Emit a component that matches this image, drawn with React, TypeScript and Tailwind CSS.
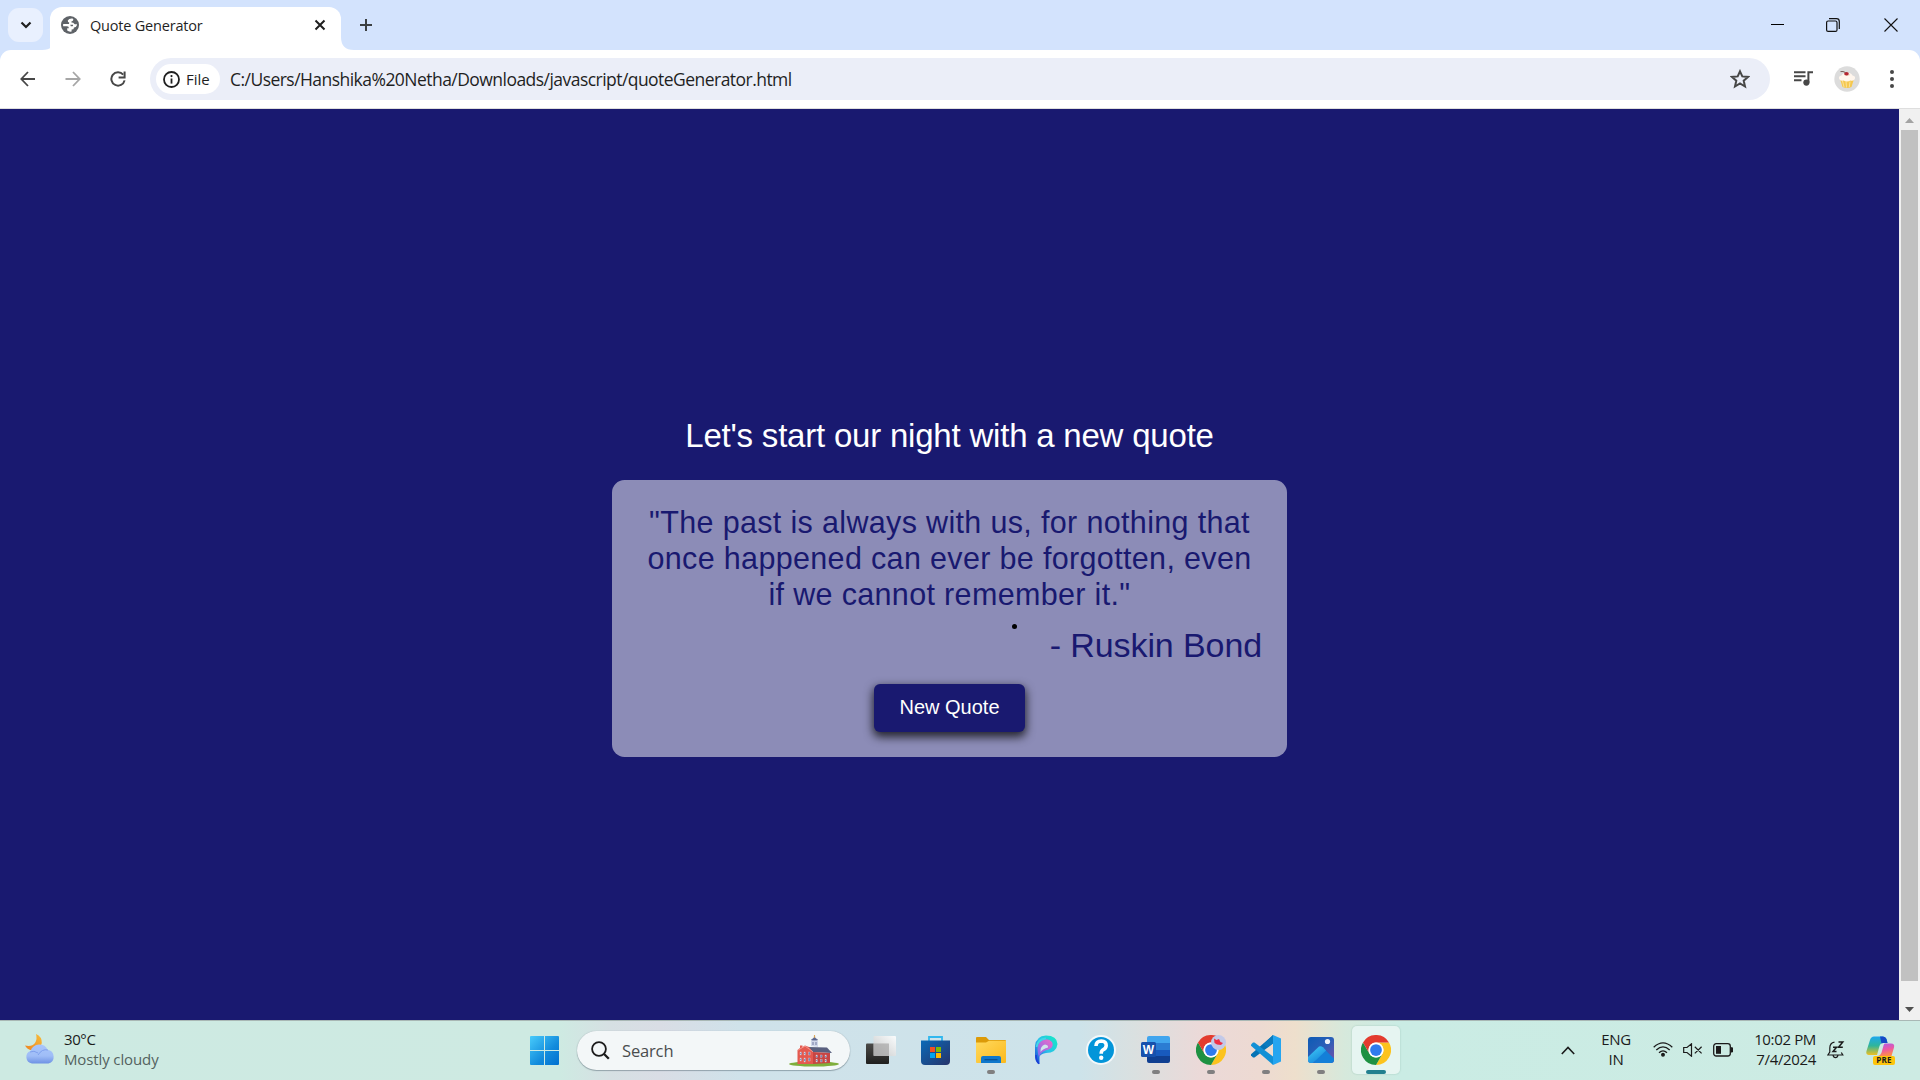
import React from "react";

const ui = "font-['Open_Sans','Noto_Sans',sans-serif]";
const arial = "font-['Liberation_Sans',Arial,sans-serif]";

function Globe() {
  return (
    <svg width="18" height="18" viewBox="0 0 18 18" className="shrink-0">
      <circle cx="9" cy="9" r="9" fill="#5f6368" />
      <path d="M11.6 2.6 Q8 2.2 6.8 4.6 Q6.6 6.4 8.2 6.6 L8 8 H2.2 Q1.900 9.200 2.200 10.200 H6 Q8 10.300 7.900 12.200 H6.200 V14.600 Q8 16 10.600 15.500 V13.600 Q13 13.600 13 11.400 Q15.200 11.400 15.800 9.400 Q15.900 8.600 15.700 7.800 Q14.400 8.800 13.200 7.800 Q12.600 6.400 10.400 6.400 V5.400 Q12.400 5.400 12.400 3.600 Z" fill="#fff" />
      <path d="M9.200 8.700 H12 Q12.400 9.600 11.600 10.300 H9.800 Q9.600 9.200 9.200 8.700Z" fill="#5f6368" />
    </svg>
  );
}

function ChromeLogo() {
  return (
    <svg width="30" height="30" viewBox="0 0 48 48">
      <path d="M24 12 H44.8 A24 24 0 0 1 24 48 L34.4 30 A12 12 0 0 0 24 12 Z" fill="#fcc31e" />
      <path d="M3.2 12 A24 24 0 0 0 24 48 L34.4 30 A12 12 0 0 1 13.6 30 Z" fill="#1e9142" />
      <path d="M3.2 12 A24 24 0 0 1 44.8 12 H24 A12 12 0 0 0 13.6 30 Z" fill="#e33b2e" />
      <circle cx="24" cy="24" r="12" fill="#fff" />
      <circle cx="24" cy="24" r="9.4" fill="#2f7bee" />
    </svg>
  );
}

function Slot({ children, state = "none" }: { children: React.ReactNode; state?: "none" | "open" | "active" }) {
  return (
    <div className="relative flex h-full w-[55px] shrink-0 items-center justify-center pb-px">
      {state === "active" && <div className="absolute inset-x-[3.5px] top-[5px] h-[48px] rounded-[5px] bg-[#e6f5f1] shadow-[0_0_1px_1px_rgba(150,190,180,0.25)]" />}
      <div className="relative">{children}</div>
      {state === "open" && <div className="absolute bottom-[6px] h-1 w-2 rounded-full bg-[#807f80]" />}
      {state === "active" && <div className="absolute bottom-[6px] h-1 w-5 rounded-full bg-[#22808f]" />}
    </div>
  );
}

function TabStrip() {
  return (
    <div className="flex h-[50px] w-full shrink-0 bg-[#d3e3fd]">
      <div className="ml-2 mt-2 flex h-[34px] w-[35px] items-center justify-center rounded-[11px] bg-[#e9f0fe]">
        <svg width="12" height="8" viewBox="0 0 12 8"><path d="M1.5 1.5 L6 6 L10.5 1.5" fill="none" stroke="#1f1f1f" strokeWidth="2.2" /></svg>
      </div>
      <svg width="13" height="13" viewBox="0 0 13 13" className="-ml-px mr-[-5px] mt-auto w-[13px] shrink-0"><path d="M13 0 V13 H0 Q13 13 13 0Z" fill="#fff" /></svg>
      <div className="mt-[7px] flex h-[43px] w-[291px] items-center rounded-t-[12px] bg-white pl-[11px] pr-[15px] pb-[7px]">
        <Globe />
        <span className={`${ui} ml-[11px] mt-[2px] flex-1 whitespace-nowrap text-[14.5px] tracking-[-0.2px] text-[#1f1f1f]`}>Quote Generator</span>
        <svg width="12" height="12" viewBox="0 0 12 12"><path d="M1.5 1.5 L10.5 10.5 M10.5 1.5 L1.5 10.5" stroke="#1f1f1f" strokeWidth="2" /></svg>
      </div>
      <svg width="13" height="13" viewBox="0 0 13 13" className="mt-auto shrink-0"><path d="M0 0 V13 H13 Q0 13 0 0Z" fill="#fff" /></svg>
      <svg width="14" height="14" viewBox="0 0 14 14" className="ml-[5px] mt-[18px]"><path d="M7 1 V13 M1 7 H13" stroke="#3c4043" strokeWidth="2" /></svg>
      <div className="ml-auto mr-[22px] mt-[17px] flex h-4 items-center">
        <svg width="13" height="14" viewBox="0 0 13 14" className="mr-[42px]"><path d="M0 6.500 H13" stroke="#000" strokeWidth="1" /></svg>
        <svg width="14" height="14" viewBox="0 0 14 14" className="mr-[44px]" fill="none" stroke="#111"><rect x="0.6" y="3" width="10.4" height="10.4" rx="1.5" strokeWidth="1.2" /><path d="M3 0.7 H10.5 Q13.3 0.7 13.3 3.5 V11" strokeWidth="1.2" /></svg>
        <svg width="14" height="14" viewBox="0 0 14 14"><path d="M0.5 0.5 L13.5 13.5 M13.5 0.5 L0.5 13.5" stroke="#111" strokeWidth="1.1" /></svg>
      </div>
    </div>
  );
}

function Toolbar() {
  return (
    <div className="h-[58px] w-full shrink-0 bg-[#d3e3fd]">
      <div className="flex h-full w-full items-center rounded-t-[11px] bg-white">
        <svg width="16" height="16" viewBox="0 0 16 16" className="ml-5" fill="none" stroke="#474747" strokeWidth="1.8"><path d="M15 8 H1.5 M8 1 L1.3 8 L8 15" /></svg>
        <svg width="16" height="16" viewBox="0 0 16 16" className="ml-[29px]" fill="none" stroke="#a6a6a6" strokeWidth="1.8"><path d="M0.5 8 H14.5 M8 1 L14.7 8 L8 15" /></svg>
        <svg width="16" height="16" viewBox="0 0 16 16" className="ml-[29px]" fill="none" stroke="#474747" strokeWidth="2"><path d="M13.2 3.6 A6.7 6.7 0 1 0 14.6 9.4" /><path d="M14.6 0.4 V6.4 H8.6" /></svg>
        <div className="ml-[24px] flex h-[42px] w-[1620px] items-center rounded-full bg-[#ebeef8] pl-[6px]">
          <div className="flex h-[30px] w-[64px] items-center rounded-full bg-white pl-[7px]">
            <svg width="17" height="17" viewBox="0 0 17 17" className="shrink-0"><circle cx="8.5" cy="8.5" r="7.5" fill="none" stroke="#1f1f1f" strokeWidth="1.8" /><path d="M8.5 7.5 V12.6" stroke="#1f1f1f" strokeWidth="1.8" /><circle cx="8.5" cy="5.1" r="1.1" fill="#1f1f1f" /></svg>
            <span className={`${ui} ml-[6px] text-[15px] text-[#1f1f1f]`}>File</span>
          </div>
          <span className={`${ui} ml-[10px] mt-[2px] whitespace-nowrap text-[17.5px] leading-none tracking-[-0.54px] text-[#1f1f1f]`}>C:/Users/Hanshika%20Netha/Downloads/javascript/quoteGenerator.html</span>
          <svg width="20" height="20" viewBox="0 0 20 20" className="ml-auto mr-5"><path d="M10 2.300 L12.300 7.400 L18 7.900 L13.700 11.700 L15 17.500 L10 14.400 L5 17.500 L6.300 11.700 L2 7.900 L7.700 7.400 Z" fill="none" stroke="#474747" strokeWidth="2" /></svg>
        </div>
        <svg width="19" height="15" viewBox="0 0 19 15" className="ml-[24px] mt-[-2px]"><path d="M0 1.2 H11.5 M0 5.2 H11.5 M0 9.2 H7.5" stroke="#474747" strokeWidth="1.9" /><path d="M13.4 0.2 H19 V2.3 H15.4 V11.6 H13.4 Z" fill="#474747" /><circle cx="12.4" cy="11.6" r="3.1" fill="#474747" /></svg>
        <svg width="26" height="26" viewBox="0 0 26 26" className="ml-[21px] mt-[-1px]">
          <circle cx="13" cy="13" r="12.7" fill="#dcdcdc" />
          <path d="M6 13 H20 L17.5 21 Q13 22.8 8.5 21 Z" fill="#f5c84f" />
          <path d="M8.5 15 L10 21 M12 15.5 L12.5 21.5 M16 15.5 L15.3 21" stroke="#fbe29a" strokeWidth="1" />
          <path d="M5 12.5 Q4.5 10 7.5 9.5 Q9 6.5 13 6.8 Q17 6.5 18.5 9.5 Q21.6 10 21 12.5 Q20 15.5 16.5 14.5 Q13 16.5 9.5 14.5 Q6 15.5 5 12.5Z" fill="#fff6ed" />
          <path d="M10 8.5 Q13 10.5 16 8.7" stroke="#ebcdb4" strokeWidth="0.8" fill="none" />
          <ellipse cx="12.5" cy="7.7" rx="2.3" ry="1.7" fill="#b52530" />
          <path d="M11.5 6.5 Q9 5 6.5 5.6" stroke="#6d4f48" strokeWidth="0.9" fill="none" />
        </svg>
        <svg width="4" height="18" viewBox="0 0 4 18" className="ml-[30px]" fill="#474747"><circle cx="2" cy="2" r="2" /><circle cx="2" cy="9" r="2" /><circle cx="2" cy="16" r="2" /></svg>
      </div>
    </div>
  );
}

function Page() {
  return (
    <div className="flex h-[911px] w-full shrink-0">
      <div className={`${arial} flex h-full flex-1 flex-col items-center bg-[#191970]`}>
        <h1 className="mt-[308px] whitespace-nowrap text-[33px] leading-[38px] tracking-[-0.21px] text-white">Let's start our night with a new quote</h1>
        <main className="relative mt-[25px] flex h-[277px] w-[675px] flex-col items-center rounded-[12.5px] bg-[#8c8cb7] px-[25px] pt-[24px] text-[#191970]">
          <p className="w-[625px] text-center text-[30.5px] leading-[36px] tracking-[0.34px]">
            "The past is always with us, for nothing that<br />once happened can ever be forgotten, even<br />if we cannot remember it."
          </p>
          <p className="mt-[14px] self-end text-[34px] leading-[38px] tracking-[-0.1px]">- Ruskin Bond</p>
          <button className="mt-[20px] h-[48px] w-[151px] rounded-[6px] bg-[#191970] pb-[2px] text-[20px] text-white shadow-[0_4px_10px_1px_rgba(0,0,0,0.75)]">New Quote</button>
          <div className="absolute left-[400px] top-[143.5px] size-[5px] rounded-full bg-black" />
        </main>
      </div>
      <div className="flex w-[21px] flex-col items-center bg-[#f0f0f0]">
        <svg width="9" height="5" viewBox="0 0 9 5" className="mt-[9px] shrink-0"><path d="M4.5 0 L9 5 H0Z" fill="#a3a3a3" /></svg>
        <div className="mt-[7px] h-[851px] w-[17px] shrink-0 bg-[#c1c1c1]" />
        <svg width="9" height="5" viewBox="0 0 9 5" className="mt-[26px] shrink-0"><path d="M4.5 5 L9 0 H0Z" fill="#505050" /></svg>
      </div>
    </div>
  );
}

function Capitol() {
  return (
    <svg width="50" height="32" viewBox="0 0 50 32">
      <ellipse cx="25" cy="29" rx="25" ry="2.6" fill="#7fae3c" />
      <path d="M22 11 L22 6 Q25.500 3 29 6 V12Z" fill="#cfd6ea" />
      <path d="M25.5 0 L26 4 H25Z" fill="#d89a3c" stroke="#d89a3c" strokeWidth="0.6" />
      <path d="M22.500 5 Q25.500 1 28.500 5Z M24 7 V10 M27 7 V10" fill="#5a6690" stroke="#5a6690" strokeWidth="0.8" />
      <path d="M19 12 L38 12.500 L43 18 L23 17Z" fill="#59607f" />
      <path d="M8.500 15 L11 13 V10.500 H13.500 V12 L16 10.500 L20 12 L24 17 V29 H8.500Z" fill="#e4594f" />
      <path d="M24 17 L41 18 V28 L24 29Z" fill="#c74543" />
      <path d="M8.500 15.500 L16 11 L24 16.800" stroke="#f5a59b" strokeWidth="0.8" fill="none" />
      <g fill="#6f86b8" stroke="#f6d9d6" strokeWidth="0.3">
        <rect x="11" y="17" width="1.600" height="3" /><rect x="15" y="17" width="1.600" height="3" /><rect x="19.500" y="17" width="1.600" height="3" />
        <rect x="11" y="23" width="1.600" height="3" /><rect x="15" y="23" width="1.600" height="4" /><rect x="19.500" y="23" width="1.600" height="3" />
        <rect x="27" y="20" width="1.600" height="2.500" /><rect x="31.500" y="20" width="1.600" height="2.500" /><rect x="36" y="20" width="1.600" height="2.500" />
        <rect x="27" y="24.500" width="1.600" height="2.500" /><rect x="31.500" y="24.500" width="1.600" height="2.500" /><rect x="36" y="24.500" width="1.600" height="2.500" />
      </g>
    </svg>
  );
}

function Taskbar() {
  return (
    <div className={`${ui} flex h-[60px] w-full shrink-0 items-center border-t border-[#a9b8b5] bg-[linear-gradient(90deg,#cdeae2_0px,#ceeae2_560px,#d6e0e3_610px,#d9dde5_660px,#cfe2ea_740px,#cde3ea_1080px,#dae0e0_1135px,#ebd9d8_1200px,#eddad2_1260px,#eedfcc_1295px,#d6e9dc_1345px,#caece4_1400px,#cdebe3_1920px)] text-[#1b1b1b]`}>
      <div className="flex w-[517px] items-center">
        <svg width="31" height="30" viewBox="0 0 31 30" className="ml-[25px] mt-[-4px]">
          <defs>
            <linearGradient id="moon" x1="1" y1="0" x2="0" y2="1"><stop offset="0" stopColor="#f7be3a" /><stop offset="1" stopColor="#ee8322" /></linearGradient>
            <linearGradient id="cloud" x1="0" y1="0" x2="0" y2="1"><stop offset="0" stopColor="#a9c6fb" /><stop offset="0.6" stopColor="#9fbdf7" /><stop offset="1" stopColor="#6e92e4" /></linearGradient>
          </defs>
          <path d="M11 0 Q17 2.500 16.800 9 Q15 17 7 16.500 Q2 15.500 0 11.500 Q7 13 10 9 Q12.500 5 11 0Z" fill="url(#moon)" />
          <path d="M7 29.500 A6.500 6.500 0 0 1 5.500 17 Q7.500 11 14 10.500 Q20.500 10.500 22.500 15.800 A7 7 0 0 1 23.500 29.500 Z" fill="url(#cloud)" />
          <path d="M5 18 Q9 16 13 19 M13 21 Q17 14.500 23 16" stroke="#7b9ceb" strokeWidth="0.9" fill="none" />
        </svg>
        <div className="ml-2 mt-[-4px] text-[15px] leading-5">
          <div className="tracking-[-0.4px]">30°C</div>
          <div className="tracking-[-0.12px] text-[#54625f]">Mostly cloudy</div>
        </div>
      </div>
      <Slot>
        <svg width="29" height="29" viewBox="0 0 29 29">
          <defs><linearGradient id="win" x1="0" y1="0" x2="1" y2="1"><stop offset="0" stopColor="#48cbfb" /><stop offset="0.6" stopColor="#128bdc" /><stop offset="1" stopColor="#0070d0" /></linearGradient></defs>
          <path d="M1 0 H14 V14 H0 V1 Q0 0 1 0Z M15 0 H28 Q29 0 29 1 V14 H15Z M0 15 H14 V29 H1 Q0 29 0 28Z M15 15 H29 V28 Q29 29 28 29 H15Z" fill="url(#win)" />
        </svg>
      </Slot>
      <div className="ml-[5px] mr-[3px] flex h-[39px] w-[273px] shrink-0 items-center rounded-full bg-[#f3f7f8] pl-[14px] shadow-[0_1px_1px_rgba(90,110,120,0.5),0_0_1px_rgba(90,110,120,0.5)]">
        <svg width="19" height="19" viewBox="0 0 19 19"><circle cx="8" cy="8" r="6.900" fill="none" stroke="#1b1b1b" strokeWidth="1.800" /><path d="M12.800 12.800 L17.800 17.800" stroke="#1b1b1b" strokeWidth="2.300" /></svg>
        <span className="ml-[12px] mt-px text-[16.5px] tracking-[-0.15px] text-[#4a4d4e]">Search</span>
        <div className="ml-auto mr-[11px]"><Capitol /></div>
      </div>
      <Slot>
        <svg width="30" height="28" viewBox="0 0 30 28" className="block">
          <defs>
            <linearGradient id="dk" x1="0" y1="0" x2="0" y2="1"><stop offset="0" stopColor="#4b4a48" /><stop offset="1" stopColor="#1f1f1e" /></linearGradient>
            <linearGradient id="lt" x1="0" y1="1" x2="1" y2="0"><stop offset="0" stopColor="#c5c5c5" /><stop offset="1" stopColor="#fff" /></linearGradient>
          </defs>
          <rect x="0" y="7.500" width="23" height="20.500" rx="1" fill="url(#dk)" />
          <rect x="7.500" y="0" width="22.500" height="20" rx="1" fill="url(#lt)" opacity="0.9" />
          <path d="M7.500 7.500 H23 V20 H7.500Z" fill="#a5a5a5" opacity="0.600" />
        </svg>
      </Slot>
      <Slot>
        <svg width="29" height="29" viewBox="0 0 29 29" className="block">
          <defs><linearGradient id="bag" x1="0" y1="0" x2="1" y2="1"><stop offset="0" stopColor="#0a6ab8" /><stop offset="1" stopColor="#27346b" /></linearGradient></defs>
          <path d="M8 6 V1 H21 V6" fill="none" stroke="#31b7ee" strokeWidth="1.800" />
          <path d="M0 4.500 H29 V25 Q29 29 25 29 H4 Q0 29 0 25Z" fill="url(#bag)" />
          <path d="M9 11 H14 V16 H9Z" fill="#f25022" /><path d="M15 11 H20 V16 H15Z" fill="#7fba00" /><path d="M9 17 H14 V22 H9Z" fill="#00a4ef" /><path d="M15 17 H20 V22 H15Z" fill="#ffb900" />
        </svg>
      </Slot>
      <Slot state="open">
        <svg width="30" height="26" viewBox="0 0 30 26" className="block">
          <defs><linearGradient id="fold" x1="0" y1="0" x2="1" y2="1"><stop offset="0" stopColor="#ffd95e" /><stop offset="1" stopColor="#fbb91c" /></linearGradient></defs>
          <path d="M0 1 Q0 0 1 0 H10 L13 3 H29 Q30 3 30 4 V10 H0Z" fill="#dc9a08" />
          <path d="M0 5.500 H10 L13 3.700 H30 V25 Q30 26 29 26 H1 Q0 26 0 25Z" fill="url(#fold)" />
          <path d="M5 26 V21 Q5 19 7 19 H23 Q25 19 25 21 V26Z" fill="#0f78cc" />
          <path d="M8.500 22.700 H21.500" stroke="#0a4e8f" strokeWidth="1.200" />
        </svg>
      </Slot>
      <Slot>
        <svg width="24" height="30" viewBox="0 0 24 30" className="block">
          <defs>
            <linearGradient id="pa" x1="1" y1="0" x2="0" y2="1"><stop offset="0" stopColor="#12eec0" /><stop offset="0.500" stopColor="#2ac0ea" /><stop offset="1" stopColor="#1a3fd6" /></linearGradient>
            <linearGradient id="pb" x1="1" y1="0" x2="0" y2="1"><stop offset="0" stopColor="#f06ac8" /><stop offset="1" stopColor="#7c6df0" /></linearGradient>
          </defs>
          <path d="M1 11 Q2 1 12 0.500 Q23 0.500 23.500 9 Q22.500 18 12 18 Q7 18.500 5.500 21.500 L5.500 29 Q1.500 28 1 22 Z" fill="url(#pa)" />
          <path d="M4 19 Q2 9 8 5.500 Q14 2.500 18 7 Q20.500 12 15 14.500 Q8 15 5 22 Z" fill="url(#pb)" />
          <path d="M6.500 17 Q6 11 11 9.500 Q14.500 10 14 12.500 Q9 13.500 6.500 17Z" fill="#cfe4ea" />
          <path d="M2.500 12 Q4 4 12 3.500" stroke="#43d5e6" strokeWidth="1.800" fill="none" />
          <path d="M2 20 Q2.200 26 5 28.800" stroke="#1a3fd6" strokeWidth="1.500" fill="none" />
        </svg>
      </Slot>
      <Slot>
        <svg width="30" height="30" viewBox="0 0 30 30" className="block">
          <circle cx="15" cy="15" r="15" fill="#f3f8fa" /><circle cx="15" cy="15" r="13" fill="#0395d9" />
          <path d="M10 11 Q10.200 6 15.300 6 Q20.300 6.200 20.200 10.600 Q20 13.500 17 14.800 Q15.200 15.800 15.200 18.800" fill="none" stroke="#fff" strokeWidth="3.600" /><circle cx="15.200" cy="22.700" r="2.200" fill="#fff" />
        </svg>
      </Slot>
      <Slot state="open">
        <div className="relative flex h-[28px] w-[29px] justify-end">
          <div className="flex h-[27px] w-[23px] flex-col overflow-hidden rounded-[2px]">
            <div className="flex-1 bg-[#41a5ee]" /><div className="flex-1 bg-[#2b7cd3]" /><div className="flex-1 bg-[#185abd]" /><div className="flex-1 bg-[#103f91]" />
          </div>
          <div className={`${arial} absolute left-0 top-[6px] flex h-[15px] w-[15px] items-center justify-center rounded-[1.5px] bg-[#1751ad] text-[12px] font-bold text-white`}>W</div>
        </div>
      </Slot>
      <Slot state="open">
        <ChromeLogo />
        <svg width="15" height="15" viewBox="0 0 15 15" className="absolute right-0 top-0"><circle cx="7.500" cy="7.500" r="7.500" fill="#c3c9e8" /><path d="M3 3.500 L5.500 5 L8 4 L9.500 7 L12 8 L10 10 L6 9.500 L3.500 8Z" fill="#ee2f45" /></svg>
      </Slot>
      <Slot state="open">
        <svg width="30" height="30" viewBox="0 0 30 30" className="block">
          <path d="M22 0 L30 3.500 V26.500 L22 30 Z" fill="#25a5f0" />
          <path d="M22 0 V8.500 L3.500 22.600 L2 22.500 L0 20.500 V19.300 Z" fill="#0673b5" />
          <path d="M22 30 V21.500 L3.500 7.400 L2 7.500 L0 9.500 V10.700 Z" fill="#1190d6" />
          <path d="M22 8.500 V0 L12.500 9.300 L16.500 12.500Z" fill="#0b7cc0" />
        </svg>
      </Slot>
      <Slot state="open">
        <svg width="26" height="26" viewBox="0 0 26 26" className="block">
          <defs>
            <linearGradient id="ph" x1="0" y1="0" x2="1" y2="1"><stop offset="0" stopColor="#0d5bb5" /><stop offset="0.500" stopColor="#2b5fb8" /><stop offset="1" stopColor="#7a4fa8" /></linearGradient>
            <linearGradient id="mt" x1="0" y1="0" x2="0.600" y2="1"><stop offset="0" stopColor="#45d0f8" /><stop offset="1" stopColor="#1487dc" /></linearGradient>
          </defs>
          <rect width="26" height="26" rx="3" fill="url(#ph)" />
          <path d="M11 16 L17 12.800 L26 21.500 V23 Q26 26 23 26 H6Z" fill="#137fd8" />
          <path d="M0 20 L11 9.600 Q13 8.500 15 10.300 L18 13.500 L5 26 H3 Q0 26 0 23Z" fill="url(#mt)" />
          <circle cx="19.500" cy="4.500" r="2.600" fill="#eef4fb" />
        </svg>
      </Slot>
      <Slot state="active"><ChromeLogo /></Slot>

      <div className="ml-auto flex h-full items-center">
        <svg width="14" height="9" viewBox="0 0 14 9" className="shrink-0"><path d="M0.800 8 L7 1.500 L13.200 8" fill="none" stroke="#1b1b1b" strokeWidth="1.600" /></svg>
        <div className="ml-[24px] mt-[-3px] w-[34px] text-center text-[15px] leading-5 tracking-[-0.3px]">ENG<br />IN</div>
        <svg width="20" height="15" viewBox="0 0 20 15" className="ml-[20px] mt-[-2px] shrink-0" fill="none" stroke="#1b1b1b" strokeWidth="1.300"><path d="M0.700 5.200 Q10 -3.500 19.300 5.200 M3.300 8 Q10 1.700 16.700 8 M6 10.700 Q10 7 14 10.700" /><circle cx="10" cy="12.800" r="1.300" fill="#1b1b1b" /></svg>
        <svg width="20" height="14" viewBox="0 0 20 14" className="ml-[10px] mt-[-1px] shrink-0" fill="none" stroke="#1b1b1b" strokeWidth="1.200"><path d="M0.700 4.500 H4 L8.500 0.800 V13.200 L4 9.500 H0.700Z M11.800 3.800 L18.600 10.400 M18.600 3.800 L11.800 10.400" /></svg>
        <svg width="20" height="14" viewBox="0 0 20 14" className="ml-[10px] mt-[-1px] shrink-0"><rect x="0.700" y="0.700" width="16.600" height="12.300" rx="2.500" fill="none" stroke="#1b1b1b" strokeWidth="1.300" /><rect x="3" y="3" width="5" height="7.800" fill="#1b1b1b" /><path d="M18 4.800 H19.500 V9 H18Z" fill="#1b1b1b" stroke="#1b1b1b" /></svg>
        <div className="ml-[17px] mt-[-4px] w-[66px] whitespace-nowrap text-right text-[15px] leading-5 tracking-[-0.35px]">10:02 PM<br />7/4/2024</div>
        <svg width="18" height="18" viewBox="0 0 18 18" className="ml-[11px] mt-[-1px] shrink-0" fill="none" stroke="#1b1b1b" strokeWidth="1.200"><path d="M7.500 1.200 Q2.800 2 2.800 7 V11 L0.900 14 H15.800 L14.300 11.500 M6 14.200 Q6.500 16.700 8.500 16.700 Q10.500 16.700 11 14.200" /><path d="M6 6.200 H9.500 L6 10.500 H9.500" strokeWidth="1.500" /><path d="M11.500 0.900 H15.800 L11.500 6.200 H15.800" strokeWidth="1.500" /></svg>
        <div className="relative ml-[21px] mr-[25px] h-[30px] w-[29px]">
          <svg width="29" height="28" viewBox="0 0 29 28">
            <defs>
              <linearGradient id="ca" x1="0" y1="0" x2="0" y2="1"><stop offset="0" stopColor="#1da8ee" /><stop offset="0.500" stopColor="#2fb59b" /><stop offset="1" stopColor="#f0c020" /></linearGradient>
              <linearGradient id="cb" x1="0" y1="0" x2="0.300" y2="1"><stop offset="0" stopColor="#a95cf0" /><stop offset="0.600" stopColor="#ee5aa0" /><stop offset="1" stopColor="#fd8a50" /></linearGradient>
            </defs>
            <path d="M8 0.500 H17 Q19.500 0.500 20.500 3 L21.500 7 H17 Q14.500 7 13.500 10 L11 19 H3 Q-0.500 19 0.500 15 L4 4 Q5 0.500 8 0.500Z" fill="url(#ca)" />
            <path d="M14 0.500 H17 Q19.500 0.500 20.500 3 L21.500 7 H17 L15.500 7.500Z" fill="#1549c6" />
            <path d="M19 7.500 H25 Q29 7.500 28 11.500 L25.500 20 H11 Q15 20 16 15 L17.500 9.500 Q18 7.500 19 7.500Z" fill="url(#cb)" />
          </svg>
          <div className="absolute bottom-[1px] right-0 flex h-[9px] w-[22px] items-center justify-center rounded-[2px] bg-[#fdc50b] text-[8px] font-bold leading-none tracking-[0.3px] text-[#1b1b1b]">PRE</div>
        </div>
      </div>
    </div>
  );
}

export default function App() {
  return (
    <div className="flex h-[1080px] w-[1920px] flex-col overflow-hidden bg-white">
      <TabStrip />
      <Toolbar />
      <div className="h-px w-full shrink-0 bg-[#dedede]" />
      <Page />
      <Taskbar />
    </div>
  );
}
